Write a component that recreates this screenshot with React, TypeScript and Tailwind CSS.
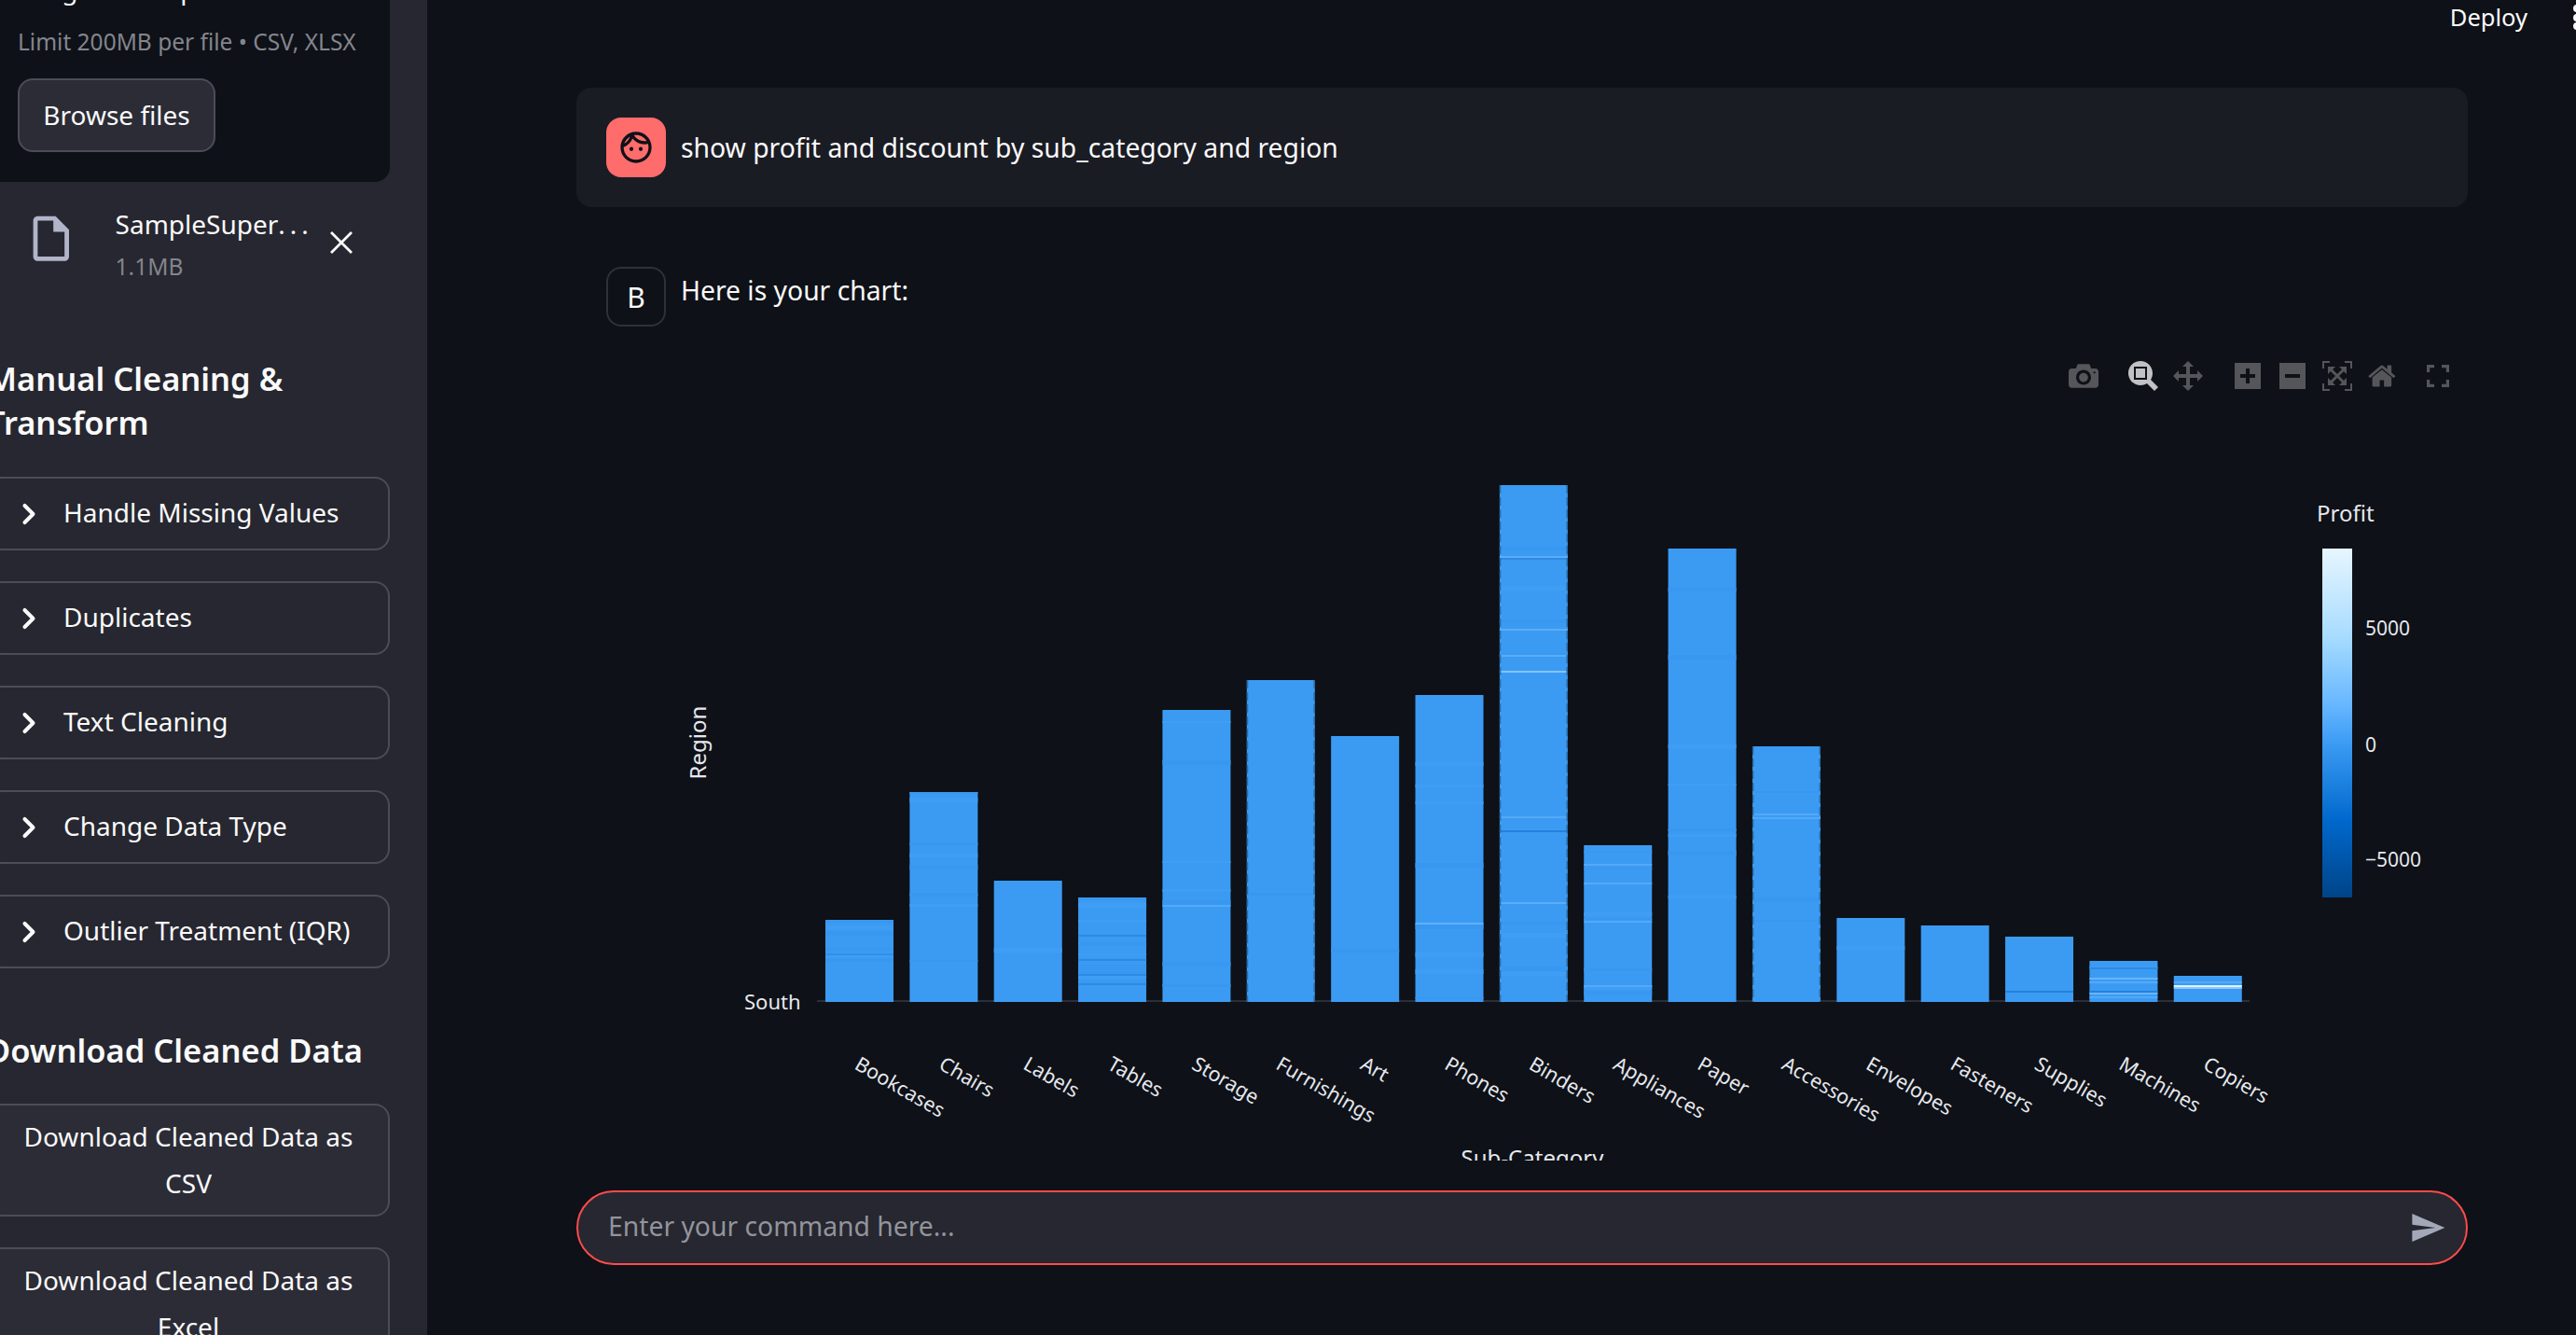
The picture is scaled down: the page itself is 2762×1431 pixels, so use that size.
import { ChevronRight } from "lucide-react";

const FONT = "font-['Noto_Sans',sans-serif]";

const expanders = [
  "Handle Missing Values",
  "Duplicates",
  "Text Cleaning",
  "Change Data Type",
  "Outlier Treatment (IQR)",
];

type Bar = {
  name: string;
  top: number;
  noise: number;
  edge?: boolean;
  marks?: [number, number, string][];
};

const bars: Bar[] = [
  { name: "Bookcases", top: 986, noise: 0.4, marks: [[1022, 2, "#338fe8"]] },
  { name: "Chairs", top: 849, noise: 0.5 },
  { name: "Labels", top: 944, noise: 0.1 },
  { name: "Tables", top: 962, noise: 0.7, marks: [[1002, 2, "#2d8ae4"], [1028, 2, "#2d8ae4"], [1044, 2, "#2d8ae4"], [1054, 2, "#2d8ae4"]] },
  { name: "Storage", top: 761, noise: 0.35, marks: [[970, 2, "#54a9f8"]] },
  { name: "Furnishings", top: 729, noise: 0.12, edge: true },
  { name: "Art", top: 789, noise: 0.12 },
  { name: "Phones", top: 745, noise: 0.45, marks: [[989, 2, "#62b0f9"]] },
  {
    name: "Binders",
    top: 520,
    noise: 0.2,
    edge: true,
    marks: [
      [596, 2, "#5cadf8"],
      [598, 2, "#2d8ae4"],
      [674, 2, "#5cadf8"],
      [702, 2, "#5cadf8"],
      [719, 2, "#86c2fb"],
      [875, 2, "#54a9f8"],
      [890, 2, "#2580de"],
      [967, 2, "#5cadf8"],
    ],
  },
  { name: "Appliances", top: 906, noise: 0.4, marks: [[926, 2, "#54a9f8"], [946, 2, "#54a9f8"], [987, 2, "#54a9f8"], [1056, 2, "#54a9f8"]] },
  { name: "Paper", top: 588, noise: 0.12 },
  { name: "Accessories", top: 800, noise: 0.2, edge: true, marks: [[872, 2, "#54a9f8"], [876, 2, "#54a9f8"]] },
  { name: "Envelopes", top: 984, noise: 0.08 },
  { name: "Fasteners", top: 992, noise: 0.04 },
  { name: "Supplies", top: 1004, noise: 0.08, marks: [[1062, 2, "#2580de"]] },
  { name: "Machines", top: 1030, noise: 0.3, marks: [[1037, 2, "#2d8ae4"], [1048, 2, "#6ab4f9"], [1052, 2, "#54a9f8"], [1062, 2, "#2580de"], [1064, 2, "#6ab4f9"], [1068, 2, "#54a9f8"]] },
  { name: "Copiers", top: 1046, noise: 0.1, marks: [[1052, 2, "#54a9f8"], [1056, 2, "#dff1ff"], [1058, 2, "#90c8fc"]] },
];

function stripes(bar: Bar, seed: number) {
  let s = seed * 7919 + 13;
  const next = () => {
    s = (s * 16807) % 2147483647;
    return s / 2147483647;
  };
  const out: [number, number, string][] = [];
  for (let y = bar.top; y < 1072; y += 6) {
    if (next() < bar.noise * 0.5) {
      out.push([y, 2 + Math.floor(next() * 4), next() > 0.5 ? "#3f9df4" : "#3898f1"]);
    }
  }
  return out;
}

function Chart() {
  return (
    <svg viewBox="730 360 1900 920" className="block w-[1900px] h-[920px]">
      <defs>
        <linearGradient id="profit" x1="0" y1="0" x2="0" y2="1">
          <stop offset="0" stopColor="#e6f6ff" />
          <stop offset="0.25" stopColor="#a8dcff" />
          <stop offset="0.45" stopColor="#66b6ff" />
          <stop offset="0.56" stopColor="#3b9bf3" />
          <stop offset="0.78" stopColor="#0068cc" />
          <stop offset="1" stopColor="#004487" />
        </linearGradient>
      </defs>
      <rect x="876" y="1072" width="1536" height="2" fill="#2d2f38" />
      {bars.map((bar, i) => {
        const x = 885 + i * 90.36;
        return (
          <g key={bar.name}>
            <rect x={x} y={bar.top} width="73" height={1074 - bar.top} fill="#3b9bf3" />
            {stripes(bar, i + 1).map(([y, h, c], k) => (
              <rect key={k} x={x} y={y} width="73" height={h} fill={c} />
            ))}
            {bar.marks?.map(([y, h, c], k) => (
              <rect key={k} x={x} y={y} width="73" height={h} fill={c} />
            ))}
            {bar.edge && (
              <g stroke="#2b6ca6" strokeWidth="1.5" strokeDasharray="9 4">
                <line x1={x + 0.7} x2={x + 0.7} y1={bar.top} y2="1074" />
                <line x1={x + 72.3} x2={x + 72.3} y1={bar.top} y2="1074" />
              </g>
            )}
            <text
              transform={`translate(${x + 30} 1145) rotate(30)`}
              fontSize="21.5"
              fill="#e6e8ee"
              fontFamily="'Noto Sans', sans-serif"
            >
              {bar.name}
            </text>
          </g>
        );
      })}
      <g fontFamily="'Noto Sans', sans-serif" fill="#e6e8ee">
        <text x="798" y="1082" fontSize="22">South</text>
        <text transform="translate(757 796) rotate(-90)" textAnchor="middle" fontSize="24">Region</text>
        <text x="1643" y="1250" textAnchor="middle" fontSize="24">Sub-Category</text>
        <text x="2484" y="559" fontSize="24">Profit</text>
        <text x="2536" y="681" fontSize="21">5000</text>
        <text x="2536" y="806" fontSize="21">0</text>
        <text x="2536" y="929" fontSize="21">−5000</text>
      </g>
      <rect x="2490" y="588" width="32" height="374" fill="url(#profit)" />
    </svg>
  );
}

// plotly modebar glyphs, y axis flipped
function ModeIcon({ d, w, asc, desc, height, color = "#55565a", className = "" }: {
  d: string;
  w: number;
  asc: number;
  desc: number;
  height: number;
  color?: string;
  className?: string;
}) {
  const h = asc - desc;
  return (
    <svg viewBox={`0 0 ${w} ${h}`} height={height} width={(height * w) / h} className={className}>
      <path d={d} fill={color} transform={`matrix(1 0 0 -1 0 ${asc})`} />
    </svg>
  );
}

function Toolbar() {
  return (
    <div className="absolute left-[1488px] top-[101px] flex items-center">
      <ModeIcon height={32} w={1000} asc={850} desc={-150} d="M500 450c-83 0-150-67-150-150 0-83 67-150 150-150 83 0 150 67 150 150 0 83-67 150-150 150z m400 150h-120c-16 0-34 13-39 29l-31 93c-6 15-23 28-40 28h-340c-16 0-34-13-39-28l-31-94c-6-15-23-28-40-28h-120c-55 0-100-45-100-100v-450c0-55 45-100 100-100h800c55 0 100 45 100 100v450c0 55-45 100-100 100z m-400-550c-138 0-250 112-250 250 0 138 112 250 250 250 138 0 250-112 250-250 0-138-112-250-250-250z m365 380c-19 0-35 16-35 35 0 19 16 35 35 35 19 0 35-16 35-35 0-19-16-35-35-35z" />
      <ModeIcon className="ml-[32px]" height={32} color="#c2c2c4" w={1000} asc={850} desc={-150} d="M1000-25l-250 251c40 63 63 138 63 218 0 224-182 406-407 406-224 0-406-182-406-406s183-406 407-406c80 0 155 22 218 62l250-250 125 125z m-812 250l0 438 437 0 0-438-437 0z m62 375l313 0 0-312-313 0 0 312z" />
      <ModeIcon className="ml-[16px]" height={32} w={1000} asc={850} desc={-150} d="M1000 350l-187 188 0-125-250 0 0 250 125 0-188 187-187-187 125 0 0-250-250 0 0 125-188-188 186-187 0 125 252 0 0-250-125 0 187-188 188 188-125 0 0 250 250 0 0-126 187 188z" />
      <ModeIcon className="ml-[34px]" height={28} w={875} asc={788} desc={-87} d="M1 787l0-875 875 0 0 875-875 0z m687-500l-187 0 0-187-125 0 0 187-188 0 0 125 188 0 0 187 125 0 0-187 187 0 0-125z" />
      <ModeIcon className="ml-[20px]" height={28} w={875} asc={788} desc={-87} d="M0 788l0-876 875 0 0 876-875 0z m688-500l-500 0 0 125 500 0 0-125z" />
      <ModeIcon className="ml-[18px]" height={32} w={1000} asc={850} desc={-150} d="M250 850l-187 0-63 0 0-62 0-188 63 0 0 188 187 0 0 62z m688 0l-188 0 0-62 188 0 0-188 62 0 0 188 0 62-62 0z m-875-938l0 188-63 0 0-188 0-62 63 0 187 0 0 62-187 0z m875 188l0-188-188 0 0-62 188 0 62 0 0 62 0 188-62 0z m-125 188l-1 0-93-94-156 156 156 156 92-93 2 0 0 250-250 0 0-2 93-92-156-156-156 156 94 92 0 2-250 0 0-250 0 0 93 93 157-156-157-156-93 94 0 0 0-250 250 0 0 0-94 93 156 157 156-157-93-93 0 0 250 0 0 250z" />
      <ModeIcon className="ml-[17px]" height={32} w={929} asc={850} desc={-150} d="M786 296v-267q0-15-11-26t-25-10h-214v214h-143v-214h-214q-15 0-25 10t-11 26v267q0 1 0 2t0 2l321 264 321-264q1-1 1-4z m124 39l-34-41q-5-5-12-6h-2q-7 0-12 3l-386 322-386-322q-7-4-13-4-7 2-12 7l-35 41q-4 5-3 13t6 12l401 334q18 15 42 15t43-15l136-114v109q0 8 5 13t13 5h107q8 0 13-5t5-13v-227l122-102q5-5 6-12t-4-13z" />
      <svg viewBox="0 0 24 24" width="24" height="24" className="ml-[33px]" fill="none" stroke="#55565a" strokeWidth="3.200">
        <path d="M1.600 8V1.600H8M16 1.600h6.400V8M22.400 16v6.400H16M8 22.400H1.600V16" />
      </svg>
    </div>
  );
}

function Sidebar() {
  return (
    <aside className="w-[458px] shrink-0 bg-[#262730] overflow-hidden text-[28px] text-[#fafafa]">
      <div className="-ml-[14px] w-[432px]">
        <div className="-mt-[32px] bg-[#0e1117] rounded-br-[16px] pl-[33px] pb-[32px]">
          <div className="h-[40px] leading-[40px]">Drag and drop file here</div>
          <div className="mt-[19px] h-[36px] leading-[36px] text-[24.500px] text-[#84858d] whitespace-nowrap">
            Limit 200MB per file • CSV, XLSX
          </div>
          <button className="mt-[21px] w-[212px] h-[79px] pb-[2px] rounded-[16px] border-2 border-[#4b4c57] bg-[#2b2c36] flex items-center justify-center">
            Browse files
          </button>
        </div>

        <div className="mt-[32px] h-[60px] pl-[40px] flex items-start">
          <svg viewBox="0 0 24 24" width="57.6" height="57.6" className="shrink-0" fill="#b1b5c9">
            <path d="M14 2H6c-1.100 0-1.990.9-1.990 2L4 20c0 1.100.89 2 1.990 2H18c1.100 0 2-.9 2-2V8l-6-6zM6 20V4h7v5h5v11H6z" />
          </svg>
          <div className="ml-[40px] w-[230px] -mt-[5px] shrink-0">
            <div className="h-[36px] leading-[36px] whitespace-nowrap">
              SampleSuper<span className="tracking-[5px]">...</span>
            </div>
            <div className="mt-[10px] h-[36px] leading-[36px] text-[24.500px] text-[#84858d]">1.1MB</div>
          </div>
          <svg viewBox="0 0 24 24" width="24" height="24" className="mt-[21px] shrink-0" fill="none" stroke="#fafafa" strokeWidth="2.800">
            <path d="M1 1l22 22M23 1L1 23" />
          </svg>
        </div>

        <h3 className="mt-[95px] text-[34.500px] leading-[47px] font-semibold">
          Manual Cleaning &amp;
          <br />
          Transform
        </h3>

        <div className="mt-[35px] flex flex-col gap-[33px]">
          {expanders.map((label) => (
            <div key={label} className="h-[79px] rounded-[16px] border-2 border-[#4b4c57] flex items-center pl-[25px]">
              <ChevronRight size={36} strokeWidth={2.7} className="shrink-0" />
              <span className="ml-[19px] mb-[3px] whitespace-nowrap">{label}</span>
            </div>
          ))}
        </div>

        <h3 className="mt-[64px] text-[34.500px] leading-[47px] font-semibold whitespace-nowrap">Download Cleaned Data</h3>

        <div className="mt-[34px] flex flex-col gap-[33px]">
          {["CSV", "Excel"].map((kind) => (
            <button
              key={kind}
              className="h-[121px] shrink-0 rounded-[16px] border-2 border-[#4b4c57] bg-[#2b2c36] px-[24px] pb-[2px] leading-[50px] text-center"
            >
              Download Cleaned Data as {kind}
            </button>
          ))}
        </div>
      </div>
    </aside>
  );
}

export default function App() {
  return (
    <div className={`${FONT} w-[2762px] h-[1431px] overflow-hidden flex bg-[#0e1117] text-[#fafafa]`}>
      <Sidebar />
      <main className="relative flex-1 min-w-0 flex flex-col">
        <div className="absolute right-0 top-0 z-10 flex text-[25.500px]">
          <span className="h-[36px] leading-[36px]">Deploy</span>
          <svg viewBox="0 0 3 36" width="3" height="36" className="ml-[49px]" fill="#fafafa">
            <circle cx="4" cy="9" r="4" />
            <circle cx="4" cy="19" r="4" />
            <circle cx="4" cy="28" r="4" />
          </svg>
        </div>

        <div className="flex-1 min-h-0 overflow-hidden pt-[94px] pl-[160px] pr-[116px]">
          <div className="h-[128px] rounded-[16px] bg-[#1a1c24] p-[32px] flex items-center">
            <div className="w-[64px] h-[64px] shrink-0 rounded-[16px] bg-[#ff6c6c] flex items-center justify-center">
              <svg viewBox="0 0 24 24" width="40" height="40" fill="#0e1117">
                <path d="M10.250 13c0 .69-.56 1.250-1.250 1.250S7.750 13.690 7.750 13s.56-1.250 1.250-1.250 1.250.56 1.250 1.250zM15 11.750c-.69 0-1.250.56-1.250 1.250s.56 1.250 1.250 1.250 1.250-.56 1.250-1.250-.56-1.250-1.250-1.250zm7 .25c0 5.520-4.480 10-10 10S2 17.520 2 12 6.480 2 12 2s10 4.480 10 10zM10.660 4.120C12.060 6.440 14.600 8 17.500 8c.46 0 .91-.05 1.340-.12C17.440 5.560 14.900 4 12 4c-.46 0-.91.05-1.340.12zM4.420 9.470c1.710-.97 3.030-2.550 3.660-4.440C6.370 6 5.050 7.580 4.420 9.470zM20 12c0-.78-.12-1.530-.33-2.240-.7.15-1.420.24-2.170.24-3.130 0-5.920-1.440-7.760-3.690C8.690 8.840 6.620 10.860 4 11.860c.01.04 0 .09 0 .14 0 4.410 3.590 8 8 8s8-3.590 8-8z" />
              </svg>
            </div>
            <p className="ml-[16px] text-[28.300px] leading-[48px]">show profit and discount by sub_category and region</p>
          </div>

          <div className="mt-[32px] pt-[32px] pl-[32px] flex">
            <div className="w-[64px] h-[64px] shrink-0 rounded-[16px] border-2 border-[#2f3139] flex items-center justify-center text-[30px]">
              B
            </div>
            <div className="ml-[16px] relative">
              <p className="-mt-[1px] text-[28.300px] leading-[52px]">Here is your chart:</p>
              <div className="mt-[23px]">
                <Chart />
              </div>
              <Toolbar />
            </div>
          </div>
        </div>

        <div className="h-[187px] shrink-0 pt-[32px] pl-[160px] pr-[116px]">
          <div className="h-[80px] rounded-[40px] border-2 border-[#ff4b4b] bg-[#262730] flex items-center pl-[32px] pr-[21px]">
            <input
              placeholder="Enter your command here..."
              className="flex-1 min-w-0 mb-[3px] bg-transparent outline-none text-[28.300px] placeholder:text-[#93949b]"
            />
            <svg viewBox="0 0 24 24" width="40" height="40" fill="#a3a8b8" className="shrink-0">
              <path d="M2.010 21 23 12 2.010 3 2 10l15 2-15 2z" />
            </svg>
          </div>
        </div>
      </main>
    </div>
  );
}
